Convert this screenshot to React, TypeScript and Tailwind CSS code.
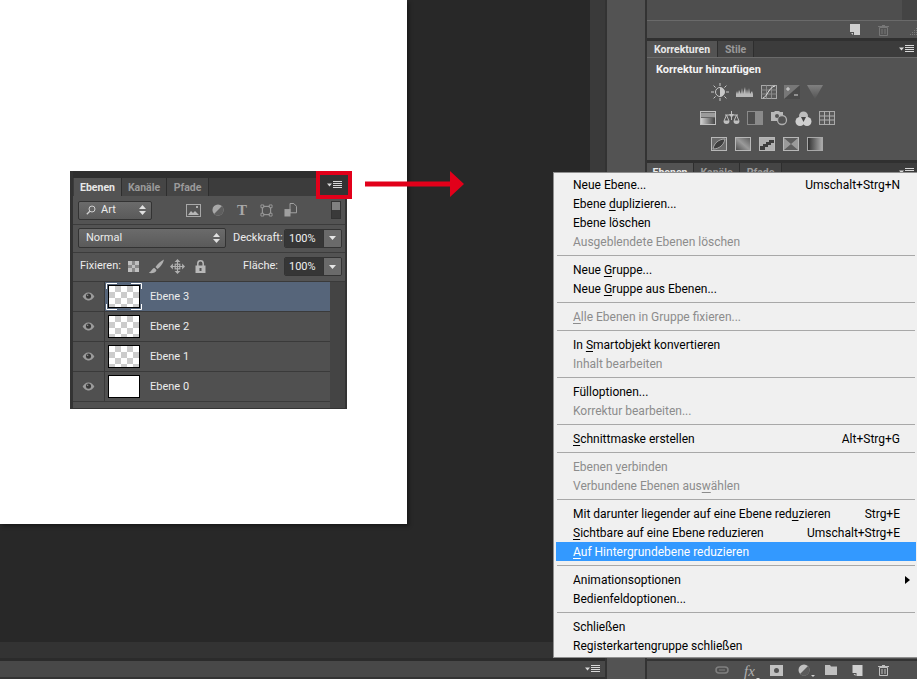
import React from 'react';

const UI_FONT = "font-['Roboto','Noto_Sans',sans-serif]";

type MenuRow = { label: React.ReactNode; shortcut?: string; disabled?: boolean; active?: boolean; arrow?: boolean };

const u = (c: string) => <span className="underline underline-offset-2">{c}</span>;

const menuGroups: MenuRow[][] = [
  [
    { label: 'Neue Ebene...', shortcut: 'Umschalt+Strg+N' },
    { label: <>Ebene {u('d')}uplizieren...</> },
    { label: 'Ebene löschen' },
    { label: 'Ausgeblendete Ebenen löschen', disabled: true },
  ],
  [
    { label: <>Neue {u('G')}ruppe...</> },
    { label: <>Neue {u('G')}ruppe aus Ebenen...</> },
  ],
  [{ label: <>{u('A')}lle Ebenen in Gruppe fixieren...</>, disabled: true }],
  [
    { label: <>In {u('S')}martobjekt konvertieren</> },
    { label: 'Inhalt bearbeiten', disabled: true },
  ],
  [
    { label: 'Fülloptionen...' },
    { label: 'Korrektur bearbeiten...', disabled: true },
  ],
  [{ label: <>{u('S')}chnittmaske erstellen</>, shortcut: 'Alt+Strg+G' }],
  [
    { label: <>Ebenen {u('v')}erbinden</>, disabled: true },
    { label: <>Verbundene Ebenen aus{u('w')}ählen</>, disabled: true },
  ],
  [
    { label: <>Mit darunter liegender auf eine Ebene red{u('u')}zieren</>, shortcut: 'Strg+E' },
    { label: <>{u('S')}ichtbare auf eine Ebene reduzieren</>, shortcut: 'Umschalt+Strg+E' },
    { label: <>{u('A')}uf Hintergrundebene reduzieren</>, active: true },
  ],
  [
    { label: 'Animationsoptionen', arrow: true },
    { label: 'Bedienfeldoptionen...' },
  ],
  [
    { label: 'Schließen' },
    { label: 'Registerkartengruppe schließen' },
  ],
];

function FlyoutIcon() {
  return (
    <svg width="16" height="8" viewBox="0 0 16 8" className="block">
      <path d="M0 2.500h5L2.500 5.500z" fill="#d8d8d8" />
      <path d="M6 .5h9M6 2.500h9M6 4.500h9M6 6.500h9" stroke="#d8d8d8" strokeWidth="1" />
    </svg>
  );
}

function Eye() {
  return (
    <svg width="13" height="9" viewBox="0 0 14 10" className="block">
      <path d="M.5 5C3 1.200 5 .6 7 .6s4 .6 6.500 4.400C11 8.800 9 9.400 7 9.400S3 8.800.5 5z" fill="#9c9c9c" />
      <circle cx="7" cy="4.600" r="2.800" fill="#383838" />
      <circle cx="6" cy="3.600" r=".9" fill="#909090" />
    </svg>
  );
}

function Stepper() {
  return (
    <svg width="7" height="10" viewBox="0 0 7 10" className="block">
      <path d="M3.500 0L7 4H0zM3.500 10L0 6h7z" fill="#e0e0e0" />
    </svg>
  );
}

function PercentField({ value }: { value: string }) {
  return (
    <div className="flex h-[19px] w-[58px] shrink-0 overflow-hidden rounded-[2px] border border-[#333333]">
      <div className={`flex-1 bg-[#363636] pl-[4px] text-[11px] leading-[18px] text-[#f0f0f0] ${UI_FONT}`}>{value}</div>
      <div className="flex w-[18px] items-center justify-center border-l border-[#333333] bg-[#6a6a6a]">
        <svg width="7" height="4" viewBox="0 0 7 4"><path d="M0 0h7L3.500 4z" fill="#e6e6e6" /></svg>
      </div>
    </div>
  );
}

function Tab({ label, active, w }: { label: string; active?: boolean; w: string }) {
  return (
    <div className={`flex h-full items-center justify-center border-r border-[#2e2e2e] pt-[2px] text-[10.5px] font-bold ${UI_FONT} ${w} ${active ? 'bg-[#535353] text-[#e8e8e8]' : 'bg-[#454545] text-[#9a9a9a]'}`}>
      {label}
    </div>
  );
}

function Thumb({ solid, selected }: { solid?: boolean; selected?: boolean }) {
  return (
    <div className="relative">
      <div
        className={`h-[23px] w-[32px] border border-black ${solid ? 'bg-white' : 'bg-[repeating-conic-gradient(#cccccc_0%_25%,#ffffff_0%_50%)] bg-[length:12px_12px]'}`}
      />
      {selected && (
        <svg width="36" height="27" viewBox="0 0 36 27" className="absolute left-[-2px] top-[-2px]">
          <path d="M.5 6V.5H11M25 .5h10.500V6M.5 21v5.500H11M25 26.500h10.500V21" fill="none" stroke="#fff" />
        </svg>
      )}
    </div>
  );
}

function LayerRow({ name, solid, selected }: { name: string; solid?: boolean; selected?: boolean }) {
  return (
    <div className="flex h-[30px] border-b border-[#3a3a3a]">
      <div className="flex w-[32px] items-center justify-center border-r border-[#3a3a3a] bg-[#505050]">
        <Eye />
      </div>
      <div className={`flex flex-1 items-center pl-[3px] ${selected ? 'bg-[#56657a]' : 'bg-[#505050]'}`}>
        <Thumb solid={solid} selected={selected} />
        <span className={`ml-[10px] pt-[2px] text-[11px] text-[#ececec] ${UI_FONT}`}>{name}</span>
      </div>
    </div>
  );
}

function LayersPanel() {
  return (
    <div className="absolute left-[70px] top-[171px] flex h-[238px] w-[277px] flex-col border-x-[3px] border-b border-[#333333] border-r-[2px] bg-[#535353]">
      <div className="h-[7px] bg-[#2f2f2f]" />
      <div className="flex h-[18px] items-end bg-[#3c3c3c] pl-[1px]">
        <Tab label="Ebenen" active w="w-[48px]" />
        <Tab label="Kanäle" w="w-[45px]" />
        <Tab label="Pfade" w="w-[42px]" />
      </div>
      <div className="flex h-[29px] items-center border-b border-[#3c3c3c] pl-[5px] pr-[4px]">
        <div className={`flex h-[19px] w-[74px] items-center rounded-[2px] border border-[#333333] bg-linear-to-b from-[#6b6b6b] to-[#5a5a5a] pl-[7px] pr-[5px] text-[11px] text-[#ececec] ${UI_FONT}`}>
          <svg width="10" height="10" viewBox="0 0 10 10" className="mr-[5px]">
            <circle cx="6" cy="4" r="3" fill="none" stroke="#d0d0d0" />
            <path d="M3.800 6.200L.8 9.200" stroke="#d0d0d0" strokeWidth="1.300" />
          </svg>
          <span className="flex-1">Art</span>
          <Stepper />
        </div>
        <div className="ml-[34px] flex items-center">
          <svg width="15" height="13" viewBox="0 0 15 13">
            <rect x=".5" y=".5" width="14" height="12" fill="#555" stroke="#a8a8a8" />
            <path d="M2 11l3-4 2 2 2-2 4 4z" fill="#b8b8b8" />
            <path d="M10 3h2M11 2v2" stroke="#d0d0d0" />
          </svg>
          <svg width="12" height="12" viewBox="0 0 14 14" className="ml-[11px]">
            <circle cx="7" cy="7" r="6.500" fill="#a8a8a8" />
            <path d="M11.600 2.400A6.500 6.500 0 0 1 2.400 11.600z" fill="#5e5e5e" />
          </svg>
          <span className="ml-[12px] flex w-[12px] justify-center font-['Liberation_Serif',serif] text-[15px] font-bold leading-none text-[#a8a8a8]">T</span>
          <svg width="13" height="13" viewBox="0 0 14 14" className="ml-[12px]">
            <rect x="2.500" y="2.500" width="9" height="9" fill="none" stroke="#a8a8a8" />
            <path d="M1 1h3v3H1zM10 1h3v3h-3zM1 10h3v3H1zM10 10h3v3h-3z" fill="#535353" stroke="#a8a8a8" strokeWidth=".8" />
          </svg>
          <svg width="13" height="14" viewBox="0 0 14 15" className="ml-[11px]">
            <path d="M6.500 .5h4l3 3v7h-7z" fill="#535353" stroke="#a8a8a8" />
            <rect x=".5" y="6.500" width="6.500" height="8" fill="#a0a0a0" />
          </svg>
        </div>
        <div className="ml-auto flex h-[18px] w-[10px] flex-col border border-[#333333]">
          <div className="h-[8px] bg-[#808080]" />
          <div className="h-[8px] bg-[#3a3a3a]" />
        </div>
      </div>
      <div className="flex h-[28px] items-center border-b border-[#3c3c3c] pb-[1px] pl-[5px]">
        <div className={`flex h-[20px] w-[148px] shrink-0 items-center justify-between rounded-[2px] border border-[#333333] bg-linear-to-b from-[#6b6b6b] to-[#5a5a5a] pl-[7px] pr-[5px] text-[11px] text-[#ececec] ${UI_FONT}`}>
          <span>Normal</span>
          <Stepper />
        </div>
        <span className={`ml-[7px] w-[51px] shrink-0 text-[11px] text-[#ececec] ${UI_FONT}`}>Deckkraft:</span>
        <PercentField value="100%" />
      </div>
      <div className="flex h-[28px] items-center pb-[1px] pl-[7px] pr-[3px]">
        <span className={`w-[48px] shrink-0 text-[11px] text-[#ececec] ${UI_FONT}`}>Fixieren:</span>
        <div className="flex items-center">
          <svg width="11" height="11" viewBox="0 0 11 11">
            <rect width="11" height="11" fill="#8a8a8a" />
            <path d="M0 0h4v4H0zM7 0h4v4H7zM4 4h3v3H4zM0 7h4v4H0zM7 7h4v4H7z" fill="#c0c0c0" />
          </svg>
          <svg width="17" height="15" viewBox="0 0 16 15" className="ml-[9px]">
            <path d="M15.500 .5C12 2 9 5 7 8l2 2c3-2 5.500-5.500 6.500-9.500z" fill="#b0b0b0" />
            <path d="M6 9c-2 0-2.500 2-3.500 3S.5 13.500.5 14c3 .5 7 0 7.500-3z" fill="#b0b0b0" />
          </svg>
          <svg width="15" height="15" viewBox="0 0 13 13" className="ml-[5px]">
            <path d="M6.500 1v11M1 6.500h11" stroke="#b0b0b0" />
            <path d="M6.500 0L9 2.500H4zM6.500 13L4 10.500h5zM0 6.500L2.500 4v5zM13 6.500L10.500 9V4z" fill="#b0b0b0" />
            <rect x="4.500" y="4.500" width="4" height="4" fill="none" stroke="#b0b0b0" />
          </svg>
          <svg width="11" height="13" viewBox="0 0 11 13" className="ml-[10px]">
            <path d="M2.800 6V3.500a2.700 2.700 0 0 1 5.400 0V6" fill="none" stroke="#b8b8b8" strokeWidth="1.500" />
            <rect x=".5" y="5.500" width="10" height="7.500" fill="#b8b8b8" />
            <rect x="4.500" y="8" width="2" height="3" fill="#535353" />
          </svg>
        </div>
        <span className={`ml-auto mr-[6px] text-[11px] text-[#ececec] ${UI_FONT}`}>Fläche:</span>
        <PercentField value="100%" />
      </div>
      <div className="flex flex-1 border-t border-[#3a3a3a]">
        <div className="flex-1 bg-[#505050]">
          <LayerRow name="Ebene 3" selected />
          <LayerRow name="Ebene 2" />
          <LayerRow name="Ebene 1" />
          <LayerRow name="Ebene 0" solid />
        </div>
        <div className="w-[15px] bg-[#444444]" />
      </div>
      <div className="absolute left-[243px] top-0 flex h-[28px] w-[36px] items-center justify-center border-[4px] border-[#e2001a] bg-[#333333] pl-[2px]">
        <FlyoutIcon />
      </div>
    </div>
  );
}

function AdjustmentsGrid() {
  return (
    <div className="flex flex-col items-center gap-[9px]">
      {/* Helligkeit, Tonwerte, Kurven, Belichtung, Dynamik */}
      <div className="flex h-[17px] items-center gap-[7px]">
        <svg width="18" height="18" viewBox="0 0 18 18">
          <circle cx="9" cy="9" r="4.500" fill="#535353" stroke="#c8c8c8" />
          <path d="M9 4.500a4.500 4.500 0 0 1 0 9z" fill="#c8c8c8" />
          <path d="M9 0v3M9 15v3M0 9h3M15 9h3M2.600 2.600l2 2M13.400 13.400l2 2M2.600 15.400l2-2M13.400 4.600l2-2" stroke="#c8c8c8" />
        </svg>
        <svg width="18" height="12" viewBox="0 0 18 12" className="mb-[3px]">
          <path d="M0 12V9l1-3 1 3 1-4 2 4 1-6 1 6 2-7 1 7 1-5 1 5 1-6 1 6 2-3 1 3v3z" fill="#b8b8b8" />
        </svg>
        <svg width="16" height="14" viewBox="0 0 16 14">
          <rect x=".5" y=".5" width="15" height="13" fill="#5a5a5a" stroke="#a8a8a8" />
          <path d="M.5 5h15M.5 9h15M5.500.5v13M10.500.5v13" stroke="#8a8a8a" />
          <path d="M2 13C6 12 8 2 14 1" fill="none" stroke="#e0e0e0" />
        </svg>
        <svg width="16" height="14" viewBox="0 0 16 14">
          <rect width="16" height="14" fill="#777" />
          <path d="M0 14L16 0v14z" fill="#4a4a4a" />
          <path d="M2 4h4M4 2v4M10 10h4" stroke="#d8d8d8" />
        </svg>
        <svg width="16" height="14" viewBox="0 0 16 14">
          <defs>
            <linearGradient id="vib" x1="0" y1="0" x2="0" y2="1">
              <stop offset="0" stopColor="#808080" />
              <stop offset="1" stopColor="#555555" />
            </linearGradient>
          </defs>
          <path d="M0 0h16L8 14z" fill="url(#vib)" />
        </svg>
      </div>
      {/* Farbton, Balance, SW, Fotofilter, Kanalmixer, Farbtabelle */}
      <div className="flex h-[17px] items-center gap-[7px]">
        <svg width="16" height="14" viewBox="0 0 16 14">
          <defs>
            <linearGradient id="hue" x1="0" y1="0" x2="1" y2="0">
              <stop offset="0" stopColor="#d0d0d0" />
              <stop offset="1" stopColor="#444444" />
            </linearGradient>
          </defs>
          <rect x=".5" y=".5" width="15" height="13" fill="#666" stroke="#c0c0c0" />
          <rect x="1" y="7" width="14" height="6" fill="url(#hue)" />
          <path d="M2 2v4M4 2v4M6 2v4M8 2v4M10 2v4M12 2v4M14 2v4" stroke="#d0d0d0" />
        </svg>
        <svg width="17" height="15" viewBox="0 0 17 15">
          <path d="M8.500 0v9M2 4h13M3.500 4L1 10h5zM13.500 4L11 10h5z" fill="none" stroke="#c0c0c0" />
          <path d="M.5 10a3 3 0 0 0 6 0zM10.500 10a3 3 0 0 0 6 0zM6 3h5L8.500 7z" fill="#c0c0c0" />
        </svg>
        <svg width="16" height="14" viewBox="0 0 16 14">
          <rect x=".5" y=".5" width="15" height="13" fill="#4e4e4e" stroke="#8a8a8a" />
          <rect x="8" y="1" width="7" height="12" fill="#8a8a8a" />
        </svg>
        <svg width="18" height="16" viewBox="0 0 18 16">
          <path d="M1 2h3l1-1h4l1 1h3v9H1z" fill="#b8b8b8" />
          <circle cx="12" cy="10" r="4.500" fill="#535353" stroke="#b0b0b0" strokeWidth="1.300" />
          <circle cx="7" cy="6" r="2" fill="#555" />
        </svg>
        <svg width="17" height="15" viewBox="0 0 17 15">
          <circle cx="8.500" cy="5" r="4.500" fill="#bdbdbd" />
          <circle cx="5" cy="10.500" r="4.500" fill="#cfcfcf" />
          <circle cx="12" cy="10.500" r="4.500" fill="#cfcfcf" />
          <path d="M6 6h5L8.500 11z" fill="#444" />
        </svg>
        <svg width="16" height="14" viewBox="0 0 16 14">
          <rect x=".5" y=".5" width="15" height="13" fill="#5a5a5a" stroke="#a8a8a8" />
          <path d="M.5 5h15M.5 9h15M5.500.5v13M10.500.5v13" stroke="#b0b0b0" />
        </svg>
      </div>
      {/* Umkehren, Tontrennung, Schwellenwert, Selektiv, Verlauf */}
      <div className="flex h-[17px] items-center gap-[8px]">
        <svg width="16" height="14" viewBox="0 0 16 14">
          <rect x=".5" y=".5" width="15" height="13" fill="#6a6a6a" stroke="#b8b8b8" />
          <path d="M2 12C3 6 8 2 14 2 13 8 8 12 2 12z" fill="#3e3e3e" stroke="#a8a8a8" />
        </svg>
        <svg width="16" height="14" viewBox="0 0 16 14">
          <defs>
            <linearGradient id="post" x1="0" y1="1" x2="1" y2="0">
              <stop offset="0" stopColor="#4a4a4a" />
              <stop offset="0.5" stopColor="#9a9a9a" />
              <stop offset="1" stopColor="#5a5a5a" />
            </linearGradient>
          </defs>
          <rect x=".5" y=".5" width="15" height="13" fill="url(#post)" stroke="#b8b8b8" />
        </svg>
        <svg width="16" height="14" viewBox="0 0 16 14">
          <rect x=".5" y=".5" width="15" height="13" fill="#b0b0b0" stroke="#b8b8b8" />
          <path d="M1 13V9h3V7h3V5h3V3h5v3h-3v2H9v2H6v3z" fill="#3e3e3e" />
        </svg>
        <svg width="16" height="14" viewBox="0 0 16 14">
          <rect x=".5" y=".5" width="15" height="13" fill="#9a9a9a" stroke="#b8b8b8" />
          <path d="M1 1l7 6 7-6zM1 13l7-6 7 6z" fill="#5e5e5e" />
        </svg>
        <svg width="16" height="14" viewBox="0 0 16 14">
          <defs>
            <linearGradient id="grad" x1="0" y1="0" x2="1" y2="0">
              <stop offset="0" stopColor="#2e2e2e" />
              <stop offset="1" stopColor="#b0b0b0" />
            </linearGradient>
          </defs>
          <rect x=".5" y=".5" width="15" height="13" fill="url(#grad)" stroke="#a8a8a8" />
        </svg>
      </div>
    </div>
  );
}

function RightDock() {
  return (
    <div className="flex w-[312px] bg-[#535353]">
      <div className="w-[40px] border-l-2 border-[#333333] bg-[#535353]" />
      <div className="flex flex-1 flex-col border-l-2 border-[#333333]">
        <div className="flex h-[20px]">
          <div className="flex-1 bg-[#4e4e4e]" />
          <div className="w-[15px] bg-[#444444]" />
        </div>
        <div className="flex h-[18px] items-center border-t border-[#6a6a6a] bg-[#535353] pl-[203px]">
          <svg width="10" height="11" viewBox="0 0 10 11">
            <path d="M0 0h10v11H4V8H0zM1 9h2v2z" fill="#d0d0d0" />
          </svg>
          <svg width="11" height="12" viewBox="0 0 11 12" className="ml-[18px]">
            <path d="M0 2.500h11M4 1.500h3M1.500 3.500h8V11.500h-8zM4 5v5M7 5v5" fill="none" stroke="#777" />
          </svg>
          <svg width="9" height="9" viewBox="0 0 9 9" className="ml-[19px] mt-[6px]">
            <path d="M8 0h1v1H8zM6 2h1v1H6zM8 2h1v1H8zM4 4h1v1H4zM6 4h1v1H6zM8 4h1v1H8zM2 6h1v1H2zM4 6h1v1H4zM6 6h1v1H6zM8 6h1v1H8z" fill="#7a7a7a" />
          </svg>
        </div>
        <div className="h-[3px] bg-[#303030]" />
        <div className="flex h-[17px] items-end justify-between border-b border-[#6a6a6a] bg-[#3c3c3c] pr-[2px]">
          <div className="flex h-full">
            <Tab label="Korrekturen" active w="w-[71px]" />
            <Tab label="Stile" w="w-[36px]" />
          </div>
          <div className="self-center"><FlyoutIcon /></div>
        </div>
        <div className="h-[102px] bg-[#535353] pt-[4px]">
          <div className={`mb-[5px] pl-[9px] text-[11px] font-bold text-[#f4f4f4] ${UI_FONT}`}>Korrektur hinzufügen</div>
          <div className="pr-[30px]"><AdjustmentsGrid /></div>
        </div>
        <div className="h-[3px] bg-[#303030]" />
        <div className="flex h-[17px] items-end justify-between bg-[#3c3c3c] pr-[2px]">
          <div className="flex h-full">
            <Tab label="Ebenen" active w="w-[47px]" />
            <Tab label="Kanäle" w="w-[46px]" />
            <Tab label="Pfade" w="w-[42px]" />
          </div>
          <div className="self-center"><FlyoutIcon /></div>
        </div>
        <div className="flex-1 bg-[#535353]" />
        <div className="flex h-[20px] items-center gap-[15px] border-t-2 border-[#333333] bg-[#4f4f4f] pl-[68px]">
          <svg width="14" height="8" viewBox="0 0 14 8">
            <rect x="1" y="1" width="12" height="6" rx="3" fill="none" stroke="#808080" strokeWidth="1.500" />
            <path d="M4 4h6" stroke="#808080" />
          </svg>
          <div className="relative">
            <span className="font-['Liberation_Serif',serif] text-[15px] italic leading-none text-[#b0b0b0]">fx</span>
            <svg width="4" height="2" viewBox="0 0 4 2" className="absolute bottom-[2px] right-[-5px]"><path d="M0 0h4L2 2z" fill="#d0d0d0" /></svg>
          </div>
          <svg width="13" height="11" viewBox="0 0 13 11">
            <rect width="13" height="11" fill="#c0c0c0" />
            <circle cx="6.500" cy="5.500" r="2.500" fill="#535353" />
          </svg>
          <div className="relative">
            <svg width="12" height="12" viewBox="0 0 12 12" className="block">
              <circle cx="6" cy="6" r="5.500" fill="#c0c0c0" />
              <path d="M10 2A5.500 5.500 0 0 1 2 10z" fill="#5a5a5a" />
            </svg>
            <svg width="4" height="2" viewBox="0 0 4 2" className="absolute bottom-[-1px] right-[-5px]"><path d="M0 0h4L2 2z" fill="#d0d0d0" /></svg>
          </div>
          <svg width="12" height="10" viewBox="0 0 12 10">
            <path d="M0 0h5l1 1.500h6V10H0z" fill="#c0c0c0" />
          </svg>
          <svg width="11" height="11" viewBox="0 0 10 11">
            <path d="M0 0h10v11H4V8H0zM1 9h2v2z" fill="#d0d0d0" />
          </svg>
          <svg width="11" height="12" viewBox="0 0 11 12">
            <path d="M0 2.500h11M4 1.500h3M1.500 3.500h8V11.500h-8zM4 5v5M7 5v5" fill="none" stroke="#c0c0c0" />
          </svg>
        </div>
      </div>
    </div>
  );
}

function FlyoutMenu() {
  return (
    <div className={`absolute left-[553px] top-[172px] w-[364px] border border-r-0 border-[#8f8f8f] bg-[#f0f0f0] pb-[2px] pl-[2px] pr-[1px] pt-[2px] text-[12px] ${UI_FONT}`}>
      {menuGroups.map((group, i) => (
        <div key={i}>
          {i > 0 && (
            <div className="flex h-[9px] items-center pl-[1px] pr-[1px]">
              <div className="h-px w-full bg-[#a8a8a8]" />
            </div>
          )}
          {group.map((row, j) => (
            <div
              key={j}
              className={`flex h-[19px] items-center justify-between pl-[17px] pr-[16px] ${row.active ? 'bg-[#3399ff] text-white' : row.disabled ? 'text-[#8c8c8c]' : 'text-black'}`}
            >
              <span>{row.label}</span>
              {row.shortcut && <span>{row.shortcut}</span>}
              {row.arrow && (
                <svg width="5" height="8" viewBox="0 0 5 8" className="mr-[-10px]"><path d="M0 0l5 4-5 4z" fill="#000" /></svg>
              )}
            </div>
          ))}
        </div>
      ))}
    </div>
  );
}

export default function App() {
  return (
    <div className="relative flex h-[679px] w-[917px] overflow-hidden bg-[#282828]">
      <div className="flex w-[605px] flex-col">
        <div className="flex h-[642px]">
          <div className="flex-1">
            <div className="h-[524px] w-[407px] bg-white shadow-[2px_2px_4px_rgba(0,0,0,0.4)]" />
          </div>
          <div className="w-[15px] bg-[#3a3a3a]" />
        </div>
        <div className="h-[16px] bg-[#333333]" />
        <div className="h-[3px] bg-[#2b2b2b]" />
        <div className="flex h-[18px] items-center justify-end border-b-2 border-[#333333] bg-[#484848] pr-[4px]">
          <FlyoutIcon />
        </div>
      </div>
      <RightDock />
      <LayersPanel />
      <svg width="100" height="26" viewBox="0 0 100 26" className="absolute left-[365px] top-[171px]">
        <path d="M0 10.500h85V0l14 13-14 13V15.500H0z" fill="#e2001a" />
      </svg>
      <FlyoutMenu />
    </div>
  );
}
